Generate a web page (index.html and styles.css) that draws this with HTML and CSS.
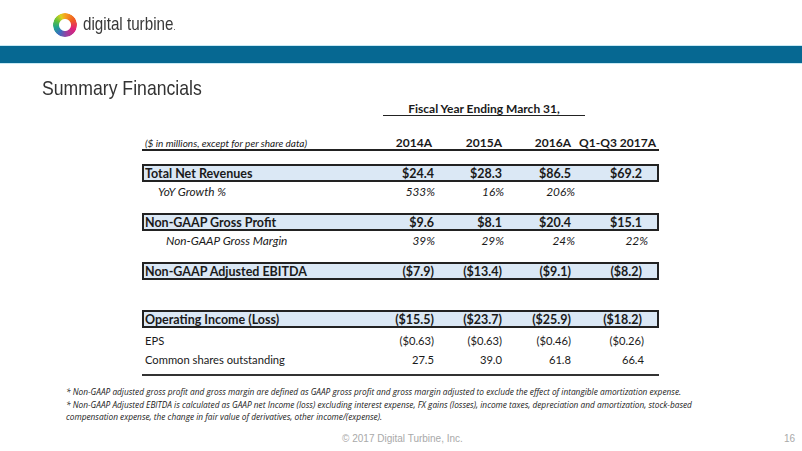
FILE: index.html
```html
<!DOCTYPE html>
<html>
<head>
<meta charset="utf-8">
<link rel="stylesheet" href="styles.css">
</head>
<body>
<div class="slide">
  <header class="top">
    <div class="logo">
      <span class="ring"></span>
      <span class="brand">digital turbine<span class="dot">.</span></span>
    </div>
  </header>
  <div class="band"></div>
  <h1 class="title">Summary Financials</h1>

  <section class="fin">
    <div class="fy-row"><div class="fy">Fiscal Year Ending March 31,</div></div>
    <div class="row head">
      <div class="lbl note">($ in millions, except for per share data)</div>
      <div class="v">2014A</div>
      <div class="v">2015A</div>
      <div class="v">2016A</div>
      <div class="v last">Q1-Q3 2017A</div>
    </div>

    <div class="row box">
      <div class="lbl">Total Net Revenues</div>
      <div class="v">$24.4</div><div class="v">$28.3</div><div class="v">$86.5</div><div class="v">$69.2</div>
    </div>
    <div class="row sub ital">
      <div class="lbl ind1">YoY Growth %</div>
      <div class="v">533%</div><div class="v">16%</div><div class="v">206%</div><div class="v"></div>
    </div>

    <div class="row box gp">
      <div class="lbl">Non-GAAP Gross Profit</div>
      <div class="v">$9.6</div><div class="v">$8.1</div><div class="v">$20.4</div><div class="v">$15.1</div>
    </div>
    <div class="row sub ital">
      <div class="lbl ind2">Non-GAAP Gross Margin</div>
      <div class="v">39%</div><div class="v">29%</div><div class="v">24%</div><div class="v">22%</div>
    </div>

    <div class="row box eb">
      <div class="lbl">Non-GAAP Adjusted EBITDA</div>
      <div class="v">($7.9)</div><div class="v">($13.4)</div><div class="v">($9.1)</div><div class="v">($8.2)</div>
    </div>

    <div class="row box op">
      <div class="lbl">Operating Income (Loss)</div>
      <div class="v">($15.5)</div><div class="v">($23.7)</div><div class="v">($25.9)</div><div class="v">($18.2)</div>
    </div>
    <div class="row plain eps">
      <div class="lbl">EPS</div>
      <div class="v">($0.63)</div><div class="v">($0.63)</div><div class="v">($0.46)</div><div class="v">($0.26)</div>
    </div>
    <div class="row plain shares">
      <div class="lbl">Common shares outstanding</div>
      <div class="v">27.5</div><div class="v">39.0</div><div class="v">61.8</div><div class="v">66.4</div>
    </div>
  </section>

  <div class="notes">
    <p>* Non-GAAP adjusted gross profit and gross margin are defined as GAAP gross profit and gross margin adjusted to exclude the effect of intangible amortization expense.</p>
    <p>* Non-GAAP Adjusted EBITDA is calculated as GAAP net Income (loss) excluding interest expense, FX gains (losses), income taxes, depreciation and amortization, stock-based compensation expense, the change in fair value of derivatives, other income/(expense).</p>
  </div>

  <footer class="foot">
    <span class="copy">© 2017 Digital Turbine, Inc.</span>
    <span class="page">16</span>
  </footer>
</div>
</body>
</html>
```

FILE: styles.css
```css
* { box-sizing: border-box; margin: 0; padding: 0; }
html, body { background: #fff; }
body { margin: 0; color: #1a1a1a; font-family: Lato, "Open Sans", sans-serif; }
.slide { width: 802px; height: 451px; overflow: hidden; position: relative; }

.top { height: 45px; padding: 13px 0 0 53px; }
.logo { display: flex; align-items: center; gap: 6px; height: 24px; }
.ring {
  flex: none;
  width: 24px; height: 24px; border-radius: 50%;
  background: conic-gradient(from 0deg, #f7a21b, #ef5a24 60deg, #e0207a 115deg, #9b3fa0 170deg, #3a6fc0 215deg, #1fa38f 255deg, #5cbf3c 295deg, #d9d21f 335deg, #f7a21b);
  -webkit-mask: radial-gradient(circle, transparent 5.5px, #000 6.5px);
  mask: radial-gradient(circle, transparent 5.5px, #000 6.5px);
}
.brand { display: inline-block; font-family: "Liberation Sans", Arial, sans-serif; font-size: 19px; color: #383838; line-height: 20px; transform: scaleX(0.8); transform-origin: left center; white-space: nowrap; }
.dot { font-size: 9px; }

.band { height: 19px; background: #066892; border-top: 1px solid #c7e9f4; border-bottom: 1px solid #c7e9f4; }

.title { display: inline-block; font-family: "Liberation Sans", Arial, sans-serif; font-weight: normal; font-size: 21px; line-height: 24px; color: #333; margin: 12px 0 0 42px; transform: scaleX(0.84); transform-origin: left center; white-space: nowrap; }

.fin { margin-left: 142px; width: 517px; }
.fy-row { height: 14px; margin-top: 2px; padding-left: 241px; }
.fy { width: 202px; font-weight: bold; font-size: 12px; line-height: 13px; text-align: center; border-bottom: 1px solid #222; height: 14px; }

.row { display: grid; grid-template-columns: 224px 68px 68px 69px 74px 14px; align-items: center; font-size: 12px; }
.row .v { text-align: right; white-space: nowrap; }
.head { margin-top: 19px; height: 16px; border-bottom: 2px solid #222; font-weight: bold; font-size: 12px; padding-bottom: 1px; }
.head .v:nth-child(2) { margin-right: 2px; }
.head .v.last { grid-column: 5 / 7; margin-right: 3px; }
.note { font-style: italic; font-weight: normal; font-size: 10px; padding-left: 3px; }

.box { height: 18px; margin-top: 13px; border: 2px solid #222; background: #dbe8f5; font-weight: bold; font-size: 12.5px; }
.box .lbl { padding-left: 1px; }
.box { grid-template-columns: 220px 70px 68px 69px 71px 13px; }
.gp { margin-top: 13px; }
.eb { margin-top: 14px; }
.op { margin-top: 30px; }

.sub { height: 18px; font-style: italic; font-size: 11.8px; grid-template-columns: 222px 71px 69px 71px 73px 11px; }
.sub + .box { margin-top: 13px; }
.ind1 { padding-left: 16px; }
.ind2 { padding-left: 24px; }

.plain { grid-template-columns: 222px 70px 68px 69px 73px 15px; font-size: 11.2px; }
.plain .lbl { padding-left: 3px; }
.eps { height: 22px; padding-top: 2px; }
.shares { height: 26px; padding-bottom: 6px; border-bottom: 2px solid #333; }

.notes { margin: 10px 0 0 66px; width: 628px; font-family: "Open Sans", sans-serif; font-style: italic; font-size: 8.3px; line-height: 12.5px; color: #1a1a1a; }

.foot { display: flex; justify-content: flex-end; align-items: center; height: 14px; margin-top: 8px; padding-right: 7px; font-family: "Liberation Sans", Arial, sans-serif; font-size: 10px; color: #a9a9a9; }
.copy { margin-right: 321px; }
.page { font-size: 10px; }
```
